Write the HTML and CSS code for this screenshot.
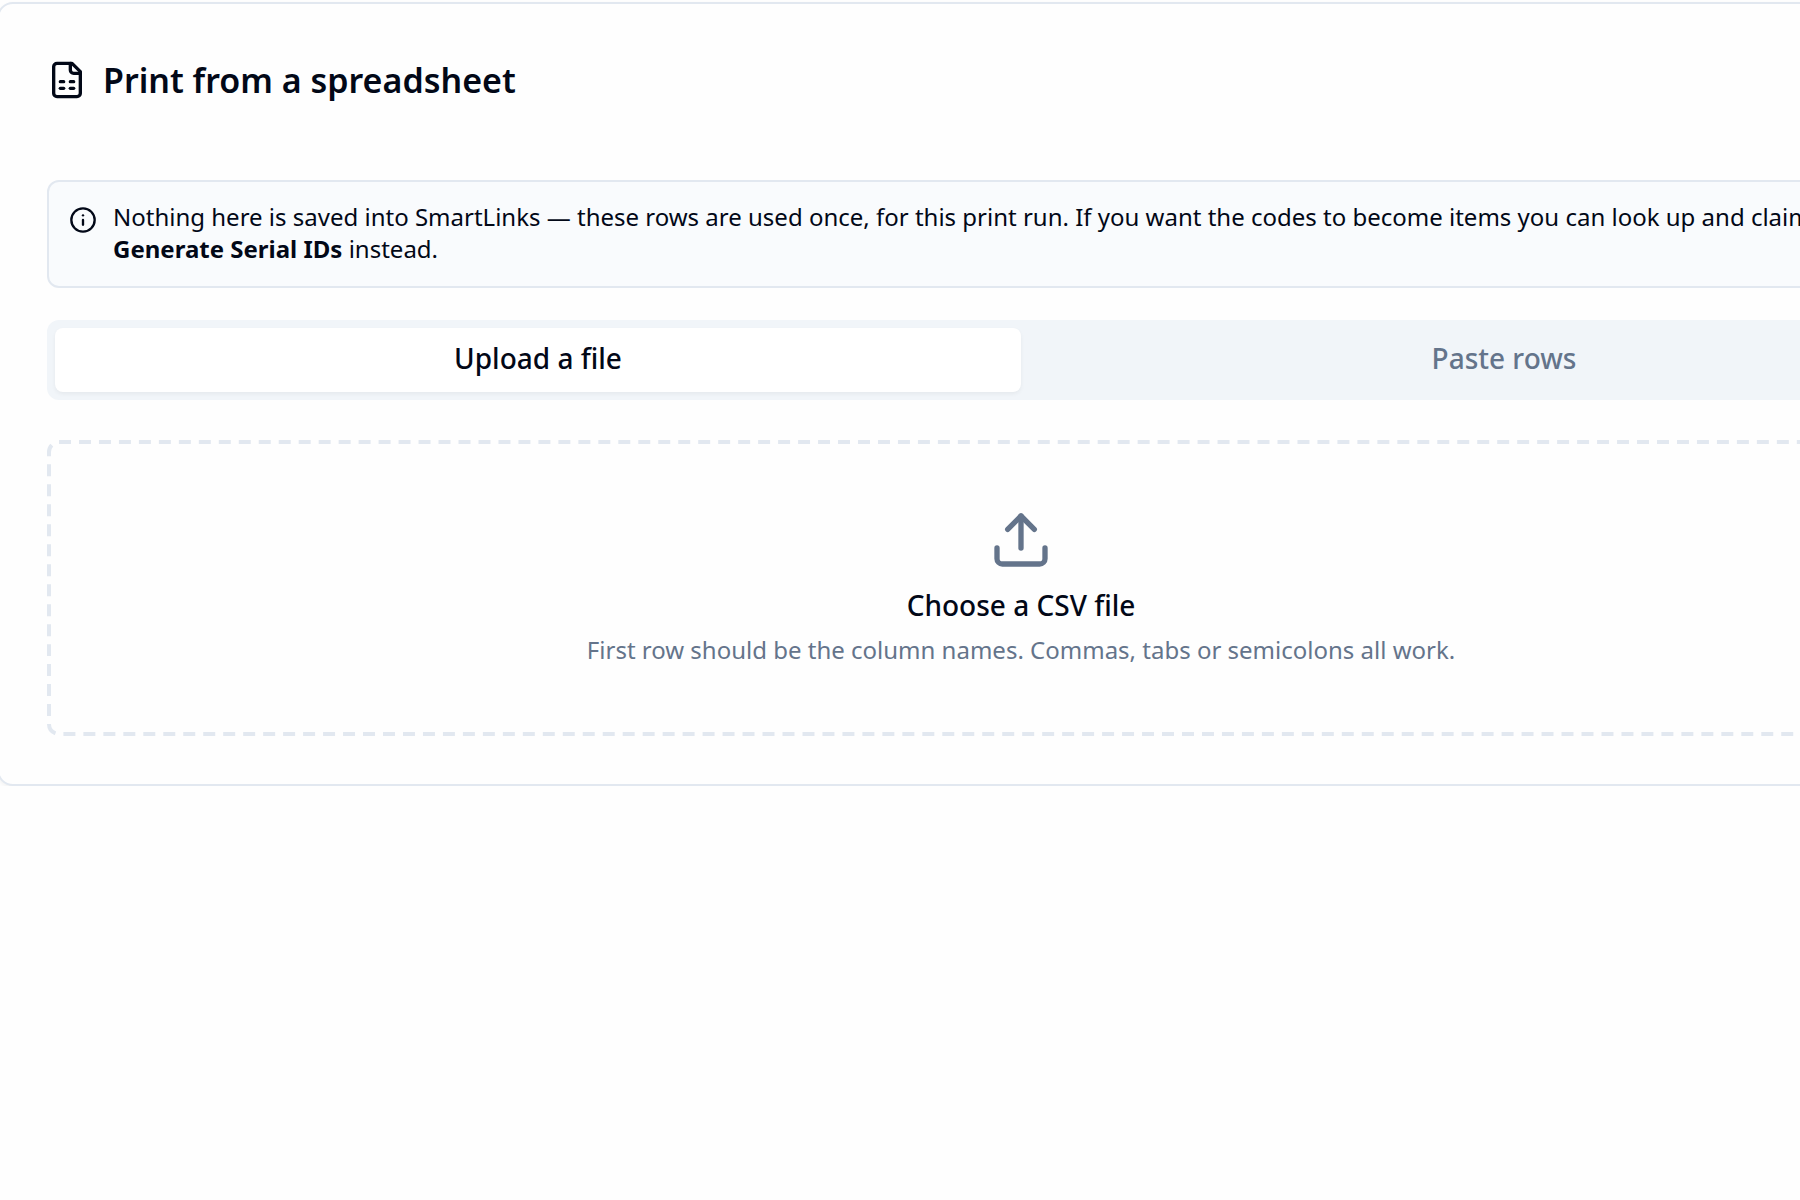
FILE: index.html
```html
<!DOCTYPE html>
<html lang="en">
<head>
    <meta charset="UTF-8">
    <meta name="viewport" content="width=device-width, initial-scale=1.0">
    <title>Print from a spreadsheet</title>
    <link rel="stylesheet" href="styles.css">
</head>
<body>
    <main class="card">
        <h1 class="card-title">
            <svg class="icon icon-title" viewBox="0 0 24 24" aria-hidden="true">
                <path d="M15 2H6a2 2 0 0 0-2 2v16a2 2 0 0 0 2 2h12a2 2 0 0 0 2-2V7Z"/>
                <path d="M14 2v4a2 2 0 0 0 2 2h4"/>
                <path d="M8 13h2"/>
                <path d="M14 13h2"/>
                <path d="M8 17h2"/>
                <path d="M14 17h2"/>
            </svg>
            Print from a spreadsheet
        </h1>

        <div class="notice">
            <svg class="icon icon-info" viewBox="0 0 24 24" aria-hidden="true">
                <circle cx="12" cy="12" r="10"/>
                <path d="M12 16v-4"/>
                <path d="M12 8h.01"/>
            </svg>
            <p>Nothing here is saved into SmartLinks — these rows are used once, for this print run. If you want the codes to become items you can look up and claim later, use <strong>Generate Serial IDs</strong> instead.</p>
        </div>

        <div class="tabs" role="tablist">
            <button class="tab active" type="button" role="tab" aria-selected="true">Upload a file</button>
            <button class="tab" type="button" role="tab" aria-selected="false">Paste rows</button>
        </div>

        <label class="dropzone" for="csv-file">
            <svg class="dropzone-border" aria-hidden="true">
                <rect width="100%" height="100%" rx="10" pathLength="4460"/>
            </svg>
            <svg class="icon icon-upload" viewBox="0 0 24 24" aria-hidden="true">
                <path d="M21 15v4a2 2 0 0 1-2 2H5a2 2 0 0 1-2-2v-4"/>
                <path d="m17 8-5-5-5 5"/>
                <path d="M12 3v12"/>
            </svg>
            <span class="dropzone-title">Choose a CSV file</span>
            <span class="dropzone-hint">First row should be the column names. Commas, tabs or semicolons all work.</span>
            <input class="file-input" id="csv-file" type="file" accept=".csv,text/csv">
        </label>
    </main>
</body>
</html>
```
FILE: styles.css
```css
:root {
    --bg: #fefefe;
    --text: #020817;
    --muted: #f1f5f9;
    --muted-text: #64748b;
    --border: #e2e8f0;
}

* {
    box-sizing: border-box;
}

html {
    overflow-x: hidden;
}

body {
    margin: 0;
    padding-top: 2px;
    font-family: "Noto Sans", sans-serif;
    background: var(--bg);
    color: var(--text);
    overflow-x: hidden;
}

/* the card runs past both sides of the window */
.card {
    width: calc(100% + 248px);
    margin-left: -3px;
    padding: 48px;
    border: 2px solid var(--border);
    border-radius: 16px;
    background: var(--bg);
    box-shadow: 0 2px 4px rgba(0, 0, 0, 0.05);
}

.icon {
    flex: none;
    fill: none;
    stroke: currentColor;
    stroke-width: 2;
    stroke-linecap: round;
    stroke-linejoin: round;
}

.card-title {
    display: flex;
    align-items: center;
    gap: 16px;
    margin: 0 0 72px;
    font-size: 34px;
    font-weight: 600;
    line-height: 56px;
}

.icon-title {
    width: 40px;
    height: 40px;
}

.notice {
    display: flex;
    gap: 16px;
    margin-bottom: 32px;
    padding: 19px 20px 21px;
    border: 2px solid var(--border);
    border-radius: 12px;
    background: #f9fbfd;
    font-size: 24px;
    line-height: 32px;
}

.notice p {
    margin: 0;
}

.icon-info {
    width: 28px;
    height: 28px;
    margin-top: 5px;
}

.tabs {
    display: grid;
    grid-template-columns: 1fr 1fr;
    margin-bottom: 40px;
    padding: 8px;
    border-radius: 12px;
    background: var(--muted);
}

.tab {
    padding: 10px 24px 14px;
    border: none;
    border-radius: 8px;
    background: none;
    font-family: inherit;
    font-size: 28px;
    font-weight: 500;
    line-height: 40px;
    color: var(--muted-text);
    cursor: pointer;
}

.tab.active {
    background: #fff;
    color: var(--text);
    box-shadow: 0 2px 4px rgba(0, 0, 0, 0.05);
}

.dropzone {
    position: relative;
    display: flex;
    flex-direction: column;
    align-items: center;
    padding: 68px 68px 70px;
    cursor: pointer;
}

.dropzone-border {
    position: absolute;
    top: 2px;
    left: 2px;
    width: calc(100% - 4px);
    height: calc(100% - 4px);
    overflow: visible;
    fill: none;
    stroke: var(--border);
    stroke-width: 4;
    stroke-dasharray: 12 8;
}

.icon-upload {
    width: 64px;
    height: 64px;
    margin-bottom: 14px;
    color: var(--muted-text);
}

.dropzone-title {
    margin-bottom: 10px;
    font-size: 28px;
    font-weight: 500;
    line-height: 38px;
}

.dropzone-hint {
    font-size: 24px;
    line-height: 32px;
    color: var(--muted-text);
}

.file-input {
    position: absolute;
    width: 1px;
    height: 1px;
    opacity: 0;
}
```
